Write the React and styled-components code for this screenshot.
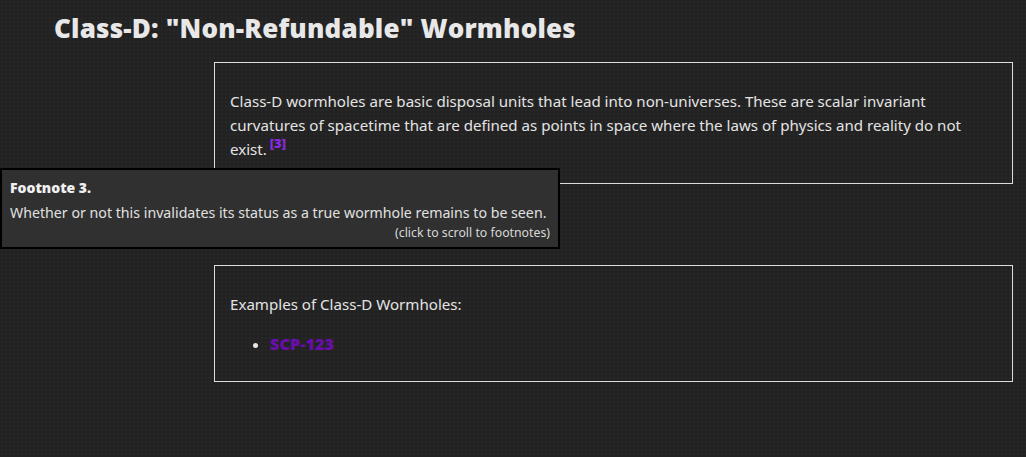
import React from 'react'
import styled, { createGlobalStyle } from 'styled-components'

const GlobalStyle = createGlobalStyle`
  html, body {
    margin: 0;
    padding: 0;
  }
  body {
    background-color: #222222;
    background-image: radial-gradient(#282828 0.8px, transparent 0.9px);
    background-size: 4px 4px;
    color: #e6e6e6;
    font-family: "Noto Sans", "Liberation Sans", sans-serif;
    height: 457px;
    overflow: hidden;
  }
`

const Page = styled.div`
  position: relative;
  padding: 11px 13px 0 54px;
`

const Heading = styled.h1`
  margin: 0 0 17px;
  font-family: "Open Sans", "Liberation Sans", sans-serif;
  font-weight: 800;
  font-size: 26px;
  line-height: 34px;
  color: #e8e8e8;
  letter-spacing: 0.2px;
`

const Box = styled.div`
  margin: 0 0 ${(p) => p.$gap || 0}px 160px;
  border: 1px solid #dcdcdc;
  padding: ${(p) => p.$pad || '26px 24px 22px 15px'};
`

const Para = styled.p`
  margin: 0;
  font-size: 15.1px;
  line-height: 24px;
  color: #e4e4e4;
`

const Ref = styled.sup`
  font-family: "Open Sans", "Liberation Sans", sans-serif;
  font-weight: 800;
  font-size: 13px;
  color: #8a2be2;
  vertical-align: 7px;
  line-height: 1;
  margin-left: 3px;
`

const List = styled.ul`
  margin: 16px 0 0;
  padding-left: 40px;
  list-style: disc;
  font-size: 15.1px;
  line-height: 24px;
`

const ListLink = styled.a`
  font-family: "Open Sans", "Liberation Sans", sans-serif;
  font-weight: 800;
  font-size: 16.3px;
  color: #6a0dad;
  text-decoration: none;
`

const Tooltip = styled.div`
  position: absolute;
  left: 0;
  top: 168px;
  width: 560px;
  box-sizing: border-box;
  border: 2px solid #000;
  background: #303030;
  padding: 8px 8px 5px 8px;
`

const TipTitle = styled.div`
  font-family: "Open Sans", "Liberation Sans", sans-serif;
  font-weight: 800;
  font-size: 14px;
  line-height: 20px;
  color: #f0f0f0;
`

const TipBody = styled.div`
  font-size: 14.2px;
  line-height: 22px;
  margin-top: 4px;
  white-space: nowrap;
  color: #e0e0e0;
`

const TipHint = styled.div`
  font-size: 12.3px;
  line-height: 18px;
  text-align: right;
  color: #d8d8d8;
`

export default function App() {
  return (
    <>
      <GlobalStyle />
      <Page>
        <Heading>Class-D: "Non-Refundable" Wormholes</Heading>
        <Box $gap={81}>
          <Para>
            Class-D wormholes are basic disposal units that lead into non-universes. These are scalar invariant
            curvatures of spacetime that are defined as points in space where the laws of physics and reality do not
            exist.<Ref>[3]</Ref>
          </Para>
        </Box>
        <Box $pad="26px 15px 25px">
          <Para>Examples of Class-D Wormholes:</Para>
          <List>
            <li>
              <ListLink href="#">SCP-123</ListLink>
            </li>
          </List>
        </Box>
      </Page>
      <Tooltip>
        <TipTitle>Footnote 3.</TipTitle>
        <TipBody>Whether or not this invalidates its status as a true wormhole remains to be seen.</TipBody>
        <TipHint>(click to scroll to footnotes)</TipHint>
      </Tooltip>
    </>
  )
}
